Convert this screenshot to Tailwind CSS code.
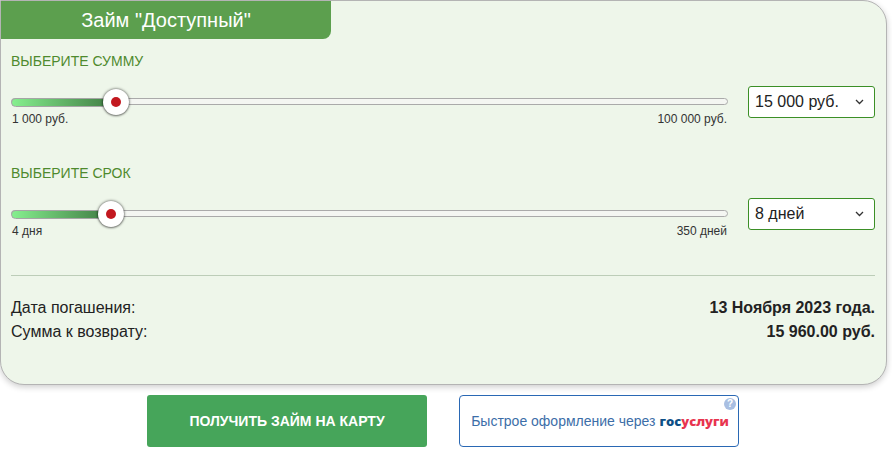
<!DOCTYPE html>
<html lang="ru">
<head>
    <meta charset="UTF-8">
    <meta name="viewport" content="width=device-width, initial-scale=1.0">
    <script src="https://cdn.jsdelivr.net/npm/@tailwindcss/browser@4"></script>
    <title>Займ</title>
</head>
<body class="bg-white font-['Liberation_Sans',Arial,sans-serif] text-[#222]">
    <div class="w-[887px] h-[385px] bg-[#eef6ea] border border-[#b4b4b4] rounded-[24px] rounded-tl-none shadow-[0_2px_6px_rgba(0,0,0,0.2)] overflow-hidden">
        <div class="w-[330px] h-[38px] bg-[#5c9f4e] rounded-br-[8px] flex items-center justify-center text-white text-[20px] leading-none">Займ "Доступный"</div>

        <div class="px-[10px] pt-[14px]">
            <div class="text-[14px] leading-[16px] text-[#4e8a2e]">ВЫБЕРИТЕ СУММУ</div>
            <div class="flex items-start mt-[17px] h-[63px]">
                <div class="w-[717px] pt-[12px]">
                    <div class="relative h-[7px] rounded-full border border-[#aaaaaa] bg-[#f4f6f2]">
                        <div class="-mt-[1px] -ml-[1px] h-[9px] w-[106px] rounded-l-full border border-[#a5a5a5] bg-gradient-to-r from-[#86f08f] to-[#3f7a42]"></div>
                        <div class="absolute left-[91px] top-[-10px] w-[26px] h-[26px] rounded-full bg-white shadow-[0_0_3px_rgba(0,0,0,0.7),0_1px_2px_rgba(0,0,0,0.3)] flex items-center justify-center">
                            <div class="w-[10px] h-[10px] rounded-full bg-[#c2181f]"></div>
                        </div>
                    </div>
                    <div class="flex justify-between text-[12px] leading-[14px] mt-[7px] text-[#333] pl-[1px] pr-[1px]">
                        <span>1 000 руб.</span><span>100 000 руб.</span>
                    </div>
                </div>
                <div class="ml-[20px] w-[127px] h-[32px] bg-white border border-[#3b8f26] rounded-[3px] flex items-center justify-between pl-[6px] pr-[10px] text-[16px]">
                    <span>15 000 руб.</span>
                    <svg width="9" height="6" viewBox="0 0 9 6" fill="none" stroke="#333" stroke-width="1.3"><path d="M1 1l3.5 3.5L8 1"/></svg>
                </div>
            </div>

            <div class="text-[14px] leading-[16px] text-[#4e8a2e] mt-[16px]">ВЫБЕРИТЕ СРОК</div>
            <div class="flex items-start mt-[17px] h-[63px]">
                <div class="w-[717px] pt-[12px]">
                    <div class="relative h-[7px] rounded-full border border-[#aaaaaa] bg-[#f4f6f2]">
                        <div class="-mt-[1px] -ml-[1px] h-[9px] w-[101px] rounded-l-full border border-[#a5a5a5] bg-gradient-to-r from-[#86f08f] to-[#3f7a42]"></div>
                        <div class="absolute left-[86px] top-[-10px] w-[26px] h-[26px] rounded-full bg-white shadow-[0_0_3px_rgba(0,0,0,0.7),0_1px_2px_rgba(0,0,0,0.3)] flex items-center justify-center">
                            <div class="w-[10px] h-[10px] rounded-full bg-[#c2181f]"></div>
                        </div>
                    </div>
                    <div class="flex justify-between text-[12px] leading-[14px] mt-[7px] text-[#333] pl-[1px] pr-[1px]">
                        <span>4 дня</span><span>350 дней</span>
                    </div>
                </div>
                <div class="ml-[20px] w-[127px] h-[32px] bg-white border border-[#3b8f26] rounded-[3px] flex items-center justify-between pl-[6px] pr-[10px] text-[16px]">
                    <span>8 дней</span>
                    <svg width="9" height="6" viewBox="0 0 9 6" fill="none" stroke="#333" stroke-width="1.3"><path d="M1 1l3.5 3.5L8 1"/></svg>
                </div>
            </div>

            <div class="border-t border-[#bccdb8] mt-[14px] w-[864px] pt-[20px] text-[16px] leading-[24px]">
                <div class="flex justify-between"><span>Дата погашения:</span><span class="font-bold">13 Ноября 2023 года.</span></div>
                <div class="flex justify-between"><span>Сумма к возврату:</span><span class="font-bold">15 960.00 руб.</span></div>
            </div>
        </div>
    </div>

    <div class="flex justify-center gap-[32px] w-[886px] mt-[10px]">
        <div class="w-[280px] h-[52px] bg-[#46a55a] rounded-[3px] flex items-center justify-center text-white font-bold text-[14px]">ПОЛУЧИТЬ ЗАЙМ НА КАРТУ</div>
        <div class="relative w-[280px] h-[52px] bg-white border border-[#2a68b4] rounded-[4px] flex items-center justify-center pl-[2px] text-[14px] text-[#3c6ea8]">
            <span class="flex items-baseline">Быстрое оформление через&nbsp;<b class="font-['Open_Sans',sans-serif] font-extrabold text-[13px] text-[#0d4f86]">гос</b><b class="font-['Open_Sans',sans-serif] font-extrabold text-[13px] text-[#e8344f]">услуги</b></span>
            <div class="absolute right-[2px] top-[2px] w-[12px] h-[12px] rounded-full bg-[#a9bfe2] text-white text-[10px] leading-[12px] font-bold text-center">?</div>
        </div>
    </div>
</body>
</html>
